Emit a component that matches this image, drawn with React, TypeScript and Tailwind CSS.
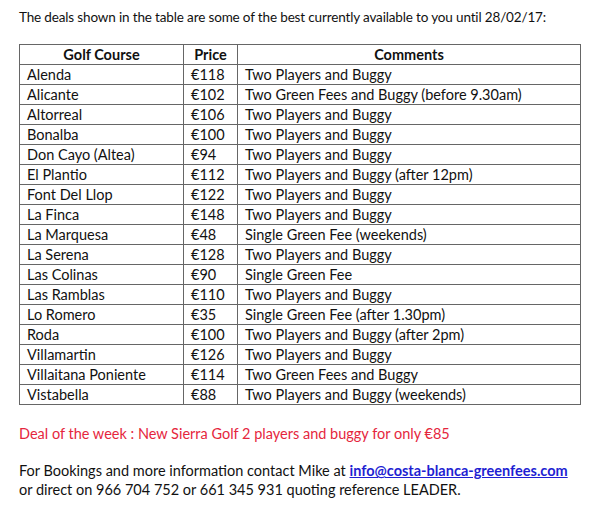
import React from "react";

const deals: [string, string, string][] = [
  ["Alenda", "€118", "Two Players and Buggy"],
  ["Alicante", "€102", "Two Green Fees and Buggy (before 9.30am)"],
  ["Altorreal", "€106", "Two Players and Buggy"],
  ["Bonalba", "€100", "Two Players and Buggy"],
  ["Don Cayo (Altea)", "€94", "Two Players and Buggy"],
  ["El Plantio", "€112", "Two Players and Buggy (after 12pm)"],
  ["Font Del Llop", "€122", "Two Players and Buggy"],
  ["La Finca", "€148", "Two Players and Buggy"],
  ["La Marquesa", "€48", "Single Green Fee (weekends)"],
  ["La Serena", "€128", "Two Players and Buggy"],
  ["Las Colinas", "€90", "Single Green Fee"],
  ["Las Ramblas", "€110", "Two Players and Buggy"],
  ["Lo Romero", "€35", "Single Green Fee (after 1.30pm)"],
  ["Roda", "€100", "Two Players and Buggy (after 2pm)"],
  ["Villamartin", "€126", "Two Players and Buggy"],
  ["Villaitana Poniente", "€114", "Two Green Fees and Buggy"],
  ["Vistabella", "€88", "Two Players and Buggy (weekends)"],
];

export default function App() {
  return (
    <div className="w-[600px] h-[507px] bg-white text-[#111] text-[14.5px] leading-[19px] font-['Lato','Open_Sans',sans-serif] px-[19px] pt-[8px]">
      <p className="text-[13.5px] tracking-[-0.15px] whitespace-nowrap">
        The deals shown in the table are some of the best currently available to you until 28/02/17:
      </p>
      <table className="mt-[17px] w-[562px] border-collapse border border-[#444] table-fixed">
        <colgroup>
          <col className="w-[164px]" />
          <col className="w-[54px]" />
          <col />
        </colgroup>
        <thead>
          <tr className="h-[20px]">
            <th className="border border-[#666] font-bold text-center p-0">Golf Course</th>
            <th className="border border-[#666] font-bold text-center p-0">Price</th>
            <th className="border border-[#666] font-bold text-center p-0">Comments</th>
          </tr>
        </thead>
        <tbody>
          {deals.map(([course, price, note]) => (
            <tr key={course} className="h-[20px]">
              <td className="border border-[#666] px-[7px] py-0 whitespace-nowrap">{course}</td>
              <td className="border border-[#666] px-[7px] py-0 whitespace-nowrap">{price}</td>
              <td className="border border-[#666] px-[7px] py-0 whitespace-nowrap">{note}</td>
            </tr>
          ))}
        </tbody>
      </table>
      <p className="mt-[19px] text-[#e5263d]">Deal of the week : New Sierra Golf 2 players and buggy for only €85</p>
      <p className="mt-[18px]">
        For Bookings and more information contact Mike at{" "}
        <a href="#" className="text-[#1f1fd2] underline font-bold">info@costa-blanca-greenfees.com</a>
        <br />
        or direct on 966 704 752 or 661 345 931 quoting reference LEADER.
      </p>
    </div>
  );
}
